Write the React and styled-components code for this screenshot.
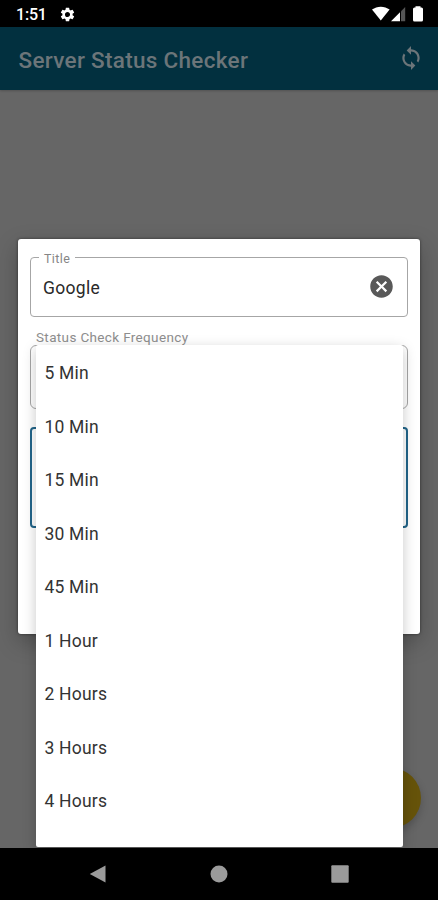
import React from "react"
import styled, { createGlobalStyle } from "styled-components"

const options = [
  "5 Min",
  "10 Min",
  "15 Min",
  "30 Min",
  "45 Min",
  "1 Hour",
  "2 Hours",
  "3 Hours",
  "4 Hours",
]

const App = () => {
  return (
    <>
      <GlobalStyle />
      <Screen>
        <StatusBar>
          <Clock>1:51</Clock>
          <GearIcon viewBox="0 0 24 24">
            <path d="M19.14 12.94c.04-.3.06-.61.06-.94 0-.32-.02-.64-.07-.94l2.03-1.58a.49.49 0 0 0 .12-.61l-1.92-3.32a.49.49 0 0 0-.59-.22l-2.39.96c-.5-.38-1.03-.7-1.62-.94l-.36-2.54a.48.48 0 0 0-.48-.41h-3.84c-.24 0-.43.17-.47.41l-.36 2.54c-.59.24-1.13.57-1.62.94l-2.39-.96a.48.48 0 0 0-.59.22L2.74 8.87c-.12.21-.08.47.12.61l2.03 1.58c-.05.3-.09.63-.09.94s.02.64.07.94l-2.03 1.58a.49.49 0 0 0-.12.61l1.92 3.32c.12.22.37.29.59.22l2.39-.96c.5.38 1.03.7 1.62.94l.36 2.54c.05.24.24.41.48.41h3.84c.24 0 .44-.17.47-.41l.36-2.54c.59-.24 1.13-.56 1.62-.94l2.39.96c.22.08.47 0 .59-.22l1.92-3.32a.47.47 0 0 0-.12-.61l-2.01-1.58zM12 15.6A3.61 3.61 0 0 1 8.4 12c0-1.98 1.62-3.6 3.6-3.6s3.6 1.62 3.6 3.6-1.62 3.6-3.6 3.6z" />
          </GearIcon>
          <Indicators viewBox="0 0 52 16">
            <path d="M0 3.6C5 -.3 12.6 -.3 17.6 3.6L8.8 14.4Z" />
            <path d="M19 15.2L28 6.2V15.2Z" />
            <path d="M29 5.2L33.2 1V15.2H29Z" fill="#555" />
            <path d="M43.5 1.6V.2H48.5V1.6H49.5Q51 1.6 51 3.1V13.9Q51 15.4 49.5 15.4H42.5Q41 15.4 41 13.9V3.1Q41 1.6 42.5 1.6Z" />
          </Indicators>
        </StatusBar>
        <AppBar>
          <AppTitle>Server Status Checker</AppTitle>
          <SyncIcon viewBox="0 0 24 24">
            <path d="M12 4V1L8 5l4 4V6c3.31 0 6 2.69 6 6 0 1.01-.25 1.97-.7 2.8l1.46 1.46A7.93 7.93 0 0 0 20 12c0-4.42-3.58-8-8-8zm0 14c-3.31 0-6-2.69-6-6 0-1.01.25-1.97.7-2.8L5.24 7.74A7.93 7.93 0 0 0 4 12c0 4.42 3.58 8 8 8v3l4-4-4-4v3z" />
          </SyncIcon>
        </AppBar>
        <Content>
          <Dialog>
            <TitleField>
              <Legend>Title</Legend>
              <Value>Google</Value>
              <ClearIcon viewBox="0 0 24 24">
                <path d="M12 2C6.47 2 2 6.47 2 12s4.47 10 10 10 10-4.47 10-10S17.53 2 12 2zm5 13.59L15.59 17 12 13.41 8.41 17 7 15.59 10.59 12 7 8.41 8.41 7 12 10.59 15.59 7 17 8.41 13.41 12 17 15.59z" />
              </ClearIcon>
            </TitleField>
            <FieldLabel>Status Check Frequency</FieldLabel>
            <SelectField />
            <FocusedField />
          </Dialog>
          <Fab />
          <Menu>
            {options.map(option => (
              <Option key={option}>{option}</Option>
            ))}
          </Menu>
        </Content>
        <NavBar>
          <NavIcon viewBox="0 0 18 18">
            <path d="M16.5 .5V17.5L.8 9Z" />
          </NavIcon>
          <NavIcon viewBox="0 0 18 18">
            <circle cx="9" cy="9" r="8.5" />
          </NavIcon>
          <NavIcon viewBox="0 0 18 18">
            <rect x="0.3" y="0.3" width="17.4" height="17.4" rx="1" />
          </NavIcon>
        </NavBar>
      </Screen>
    </>
  )
}

const GlobalStyle = createGlobalStyle`
  * {
    box-sizing: border-box;
  }
  body {
    margin: 0;
    font-family: Roboto, "Liberation Sans", sans-serif;
  }
`

const Screen = styled.div`
  display: flex;
  flex-direction: column;
  width: 438px;
  height: 900px;
  overflow: hidden;
  background: #666;
`

const StatusBar = styled.header`
  display: flex;
  align-items: center;
  height: 27px;
  padding: 1px 14px 0 16px;
  background: #000;
  color: #fff;
`

const Clock = styled.span`
  width: 43px;
  font-size: 16px;
  font-weight: 500;
  letter-spacing: -0.2px;
`

const GearIcon = styled.svg`
  width: 17px;
  height: 17px;
  fill: #fff;
`

const Indicators = styled.svg`
  width: 52px;
  height: 16px;
  margin-left: auto;
  fill: #fff;
`

const AppBar = styled.div`
  display: flex;
  align-items: center;
  justify-content: space-between;
  height: 63px;
  padding: 0 14px 0 18.5px;
  background: #02303f;
  box-shadow: 0 1px 2px rgba(0, 0, 0, 0.2);
  color: #6c7579;
`

const AppTitle = styled.h1`
  margin: 2px 0 0;
  font-size: 22.5px;
  font-weight: 500;
  letter-spacing: 0.3px;
  white-space: nowrap;
`

const SyncIcon = styled.svg`
  width: 26px;
  height: 26px;
  margin-bottom: 1px;
  fill: currentColor;
`

const Content = styled.main`
  position: relative;
  height: 758px;
  padding: 149px 18px 0;
  overflow: hidden;
`

const Dialog = styled.section`
  height: 395px;
  padding: 18px 12px 0;
  border-radius: 3px;
  background: #fff;
  box-shadow: 0 8px 22px rgba(0, 0, 0, 0.25), 0 0 3px rgba(0, 0, 0, 0.5);
`

const Field = styled.div`
  border: 1px solid #a6a6a6;
  border-radius: 4px;
`

const TitleField = styled(Field)`
  position: relative;
  display: flex;
  align-items: center;
  justify-content: space-between;
  height: 60px;
  padding: 0 12px;
`

const Legend = styled.span`
  position: absolute;
  top: -7px;
  left: 8px;
  padding: 0 5px;
  background: #fff;
  color: #858585;
  font-size: 12.5px;
  line-height: 16px;
  letter-spacing: 0.4px;
`

const Value = styled.span`
  margin-top: 1px;
  color: #2a2a2a;
  font-size: 17.5px;
  letter-spacing: 0.3px;
`

const ClearIcon = styled.svg`
  width: 27px;
  height: 27px;
  margin-bottom: 1px;
  fill: #595959;
`

const FieldLabel = styled.div`
  margin-top: 12px;
  padding-left: 6px;
  color: #8e8e8e;
  font-size: 13.5px;
  line-height: 16px;
  letter-spacing: 0.35px;
`

const SelectField = styled(Field)`
  height: 64px;
  border-radius: 6px;
`

const FocusedField = styled(Field)`
  height: 101px;
  margin-top: 18px;
  border: 2px solid #22658a;
`

/* Dimmed action button, mostly hidden by the open menu */
const Fab = styled.div`
  position: absolute;
  right: 17px;
  bottom: 20px;
  width: 60px;
  height: 60px;
  border-radius: 50%;
  background: #66530a;
  box-shadow: 0 4px 8px rgba(0, 0, 0, 0.2);
`

const Menu = styled.ul`
  position: absolute;
  top: 255px;
  left: 35.5px;
  width: 367.5px;
  height: 502px;
  margin: 0;
  padding: 1.5px 0 0;
  border-radius: 2px;
  background: #fff;
  box-shadow: 0 4px 14px rgba(0, 0, 0, 0.22);
  list-style: none;
`

const Option = styled.li`
  display: flex;
  align-items: center;
  height: 53.5px;
  padding-left: 9px;
  color: #333;
  font-size: 17.5px;
  letter-spacing: 0.2px;
`

const NavBar = styled.nav`
  display: flex;
  align-items: center;
  justify-content: center;
  gap: 103px;
  height: 52px;
  background: #000;
`

const NavIcon = styled.svg`
  width: 18px;
  height: 18px;
  fill: #9b9b9b;
`

export default App
